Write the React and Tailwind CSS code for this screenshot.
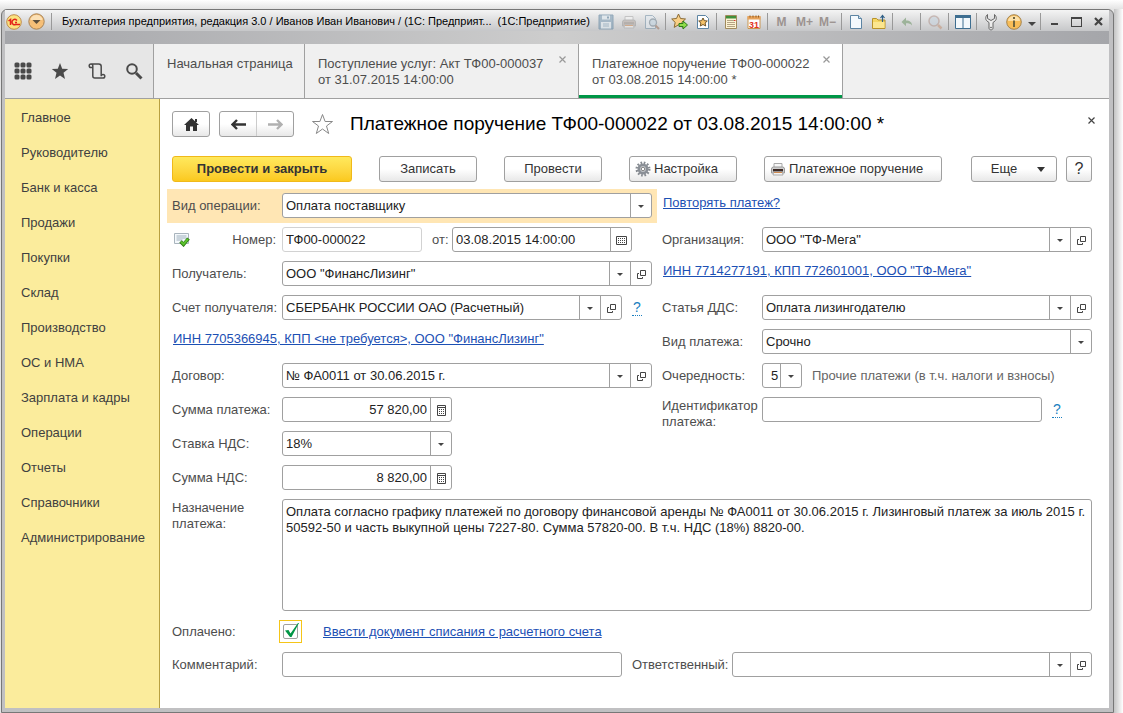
import React from 'react';

const menu = [
  'Главное',
  'Руководителю',
  'Банк и касса',
  'Продажи',
  'Покупки',
  'Склад',
  'Производство',
  'ОС и НМА',
  'Зарплата и кадры',
  'Операции',
  'Отчеты',
  'Справочники',
  'Администрирование',
];

/* ---------- icons ---------- */

const SaveIcon = () => (
  <svg width="16" height="16" viewBox="0 0 16 16" opacity="0.7">
    <path d="M1 1h14v14H1z" fill="#8fa9bd" stroke="#6f8ea6" />
    <path d="M4 1.500h8v4H4zM3 8h10v6.500H3z" fill="#dfe8ee" />
    <path d="M5 10h6M5 12h6" stroke="#8fa9bd" />
    <path d="M9 2.500h2v2H9z" fill="#6f8ea6" />
  </svg>
);

const PrintIcon = ({ faded }) => (
  <svg width="16" height="16" viewBox="0 0 16 16" opacity={faded ? 0.55 : 1}>
    <path d="M4 2.500h8v4H4z" fill="#f7f7f7" stroke="#aaa" />
    <path d="M1.500 8q0-2 2-2h9q2 0 2 2v4h-13z" fill={faded ? '#b5aaa4' : '#cfcfcf'} stroke="#999" />
    <path d="M3 8h10v2.500H3z" fill={faded ? '#9a8f88' : '#3c2a26'} />
    <path d="M3.500 11h9l.5 3h-10z" fill="#f3f3f3" stroke="#aaa" />
    <path d="M4 11.500h8" stroke="#d08a50" />
  </svg>
);

const PreviewIcon = () => (
  <svg width="16" height="16" viewBox="0 0 16 16" opacity="0.6">
    <path d="M1.500 1.500h7l3 3v10h-10z" fill="#e3eaf0" stroke="#7c97ab" />
    <circle cx="9" cy="8.500" r="3.500" fill="#c3d5e2" stroke="#7b8b98" strokeWidth="1.300" />
    <path d="M11.500 11.500 15 15" stroke="#a07a66" strokeWidth="2" />
  </svg>
);

const StarAddIcon = () => (
  <svg width="17" height="17" viewBox="0 0 17 17">
    <path d="m7.500 1 2 4.500 5 .500-3.700 3.400 1 5-4.300-2.600L3.200 14.400l1-5L.7 6l4.800-.500z" fill="#f9cf86" stroke="#8a6a33" />
    <path d="M8 10.500h4v-2.500l4.500 4-4.500 4v-2.500H8z" fill="#8fdc4b" stroke="#2e7d1a" />
  </svg>
);

const StarDocIcon = () => (
  <svg width="16" height="16" viewBox="0 0 16 16">
    <path d="M2.500 1.500h8l3 3v10h-11z" fill="#fff" stroke="#5c84a3" />
    <path d="m8 4 1.300 2.700 3 .300-2.200 2 .600 3L8 10.500 5.300 12l.600-3-2.200-2 3-.300z" fill="#f5c36a" stroke="#6f5324" />
  </svg>
);

const CalcIcon = () => (
  <svg width="16" height="16" viewBox="0 0 16 16">
    <path d="M2.500 1.500h11v13h-11z" fill="#fdf3d4" stroke="#a08a5c" />
    <path d="M3 2h10v2.500H3z" fill="#3f8f3a" />
    <path d="M4.500 6.500h7M4.500 8.500h7M4.500 10.500h7M4.500 12.500h7" stroke="#6b5532" strokeDasharray="1 1" />
    <path d="M11 6h1.500v1H11z" fill="#d33" />
  </svg>
);

const CalendarIcon = () => (
  <svg width="16" height="16" viewBox="0 0 16 16">
    <path d="M2 2.500h12v12H2z" fill="#fff" stroke="#c99650" />
    <path d="M1.500 2h13v3.500h-13z" fill="#e8a35b" />
    <path d="M4 1.500v2M7 1.500v2M10 1.500v2M12.500 1.500v2" stroke="#8d5a23" />
    <text x="8" y="13.500" textAnchor="middle" fontSize="9" fontWeight="bold" fill="#e2341d" fontFamily="Liberation Sans, sans-serif">31</text>
  </svg>
);

const DocIcon = () => (
  <svg width="16" height="16" viewBox="0 0 16 16">
    <path d="M2.500 1.500h8l3 3v10h-11z" fill="#f4f9fd" stroke="#5c84a3" />
    <path d="M10.500 1.500v3h3" fill="#cfe0ec" stroke="#5c84a3" />
  </svg>
);

const FolderIcon = () => (
  <svg width="16" height="16" viewBox="0 0 16 16">
    <path d="M1.500 4.500h4l1.500 1.500h7v8.500h-12.500z" fill="#f5d765" stroke="#b8922a" />
    <path d="M2 8h11.500v6H2z" fill="#fbe68f" />
    <path d="M11.500 8V2M9.500 4l2-2.500 2 2.500" fill="none" stroke="#2f5f86" strokeWidth="1.200" />
  </svg>
);

const UndoIcon = () => (
  <svg width="16" height="16" viewBox="0 0 16 16">
    <path d="M7 3.500v3c4 0 6 2 6 5-1.500-2-3-2.300-6-2.300v3L2.500 8z" fill="#9db39a" />
  </svg>
);

const LensIcon = () => (
  <svg width="16" height="16" viewBox="0 0 16 16" opacity="0.6">
    <circle cx="7" cy="7" r="5" fill="#c6d2dc" stroke="#b39a92" strokeWidth="1.500" />
    <path d="m11 11 3.500 3.500" stroke="#c59a80" strokeWidth="2.500" />
  </svg>
);

const PanelsIcon = () => (
  <svg width="16" height="16" viewBox="0 0 16 16">
    <path d="M.5 1.500h15v13H.5z" fill="#f3f8fb" stroke="#3e6e90" />
    <path d="M0 1h16v3H0z" fill="#3e6e90" />
    <path d="M8 4v11" stroke="#3e6e90" />
  </svg>
);

const WrenchIcon = () => (
  <svg width="16" height="18" viewBox="0 0 16 18">
    <path d="M4.500 1.500v4L8 7.500l3.500-2v-4c2 1.500 2.500 5 .500 6.500l-2 1.500v5.500c0 2.500-4 2.500-4 0V9.500L4 8C2 6.500 2.500 3 4.500 1.500z" fill="#ececec" stroke="#666" />
    <circle cx="8" cy="14.500" r=".8" fill="#555" />
  </svg>
);

const InfoIcon = () => (
  <svg width="16" height="16" viewBox="0 0 16 16">
    <circle cx="8" cy="8" r="7.300" fill="#f8bd58" stroke="#a58550" />
    <path d="M2 7a6 5 0 0 1 12 0" fill="#fce0a8" />
    <path d="M7 6.500h2V13H7zM7 3h2v2H7z" fill="#6f6540" />
  </svg>
);

const LogoIcon = () => (
  <svg width="16" height="16" viewBox="0 0 16 16">
    <circle cx="8" cy="8" r="7.300" fill="#fbe27e" stroke="#c08b4c" />
    <path d="M2.500 7 4.500 5.500V11M11 6.500C8.500 4 6 6 6 8s2 3.300 3.500 2.500H14M11 8.500H9" fill="none" stroke="#e3231b" strokeWidth="1.500" />
  </svg>
);

const MenuDropIcon = () => (
  <svg width="17" height="17" viewBox="0 0 17 17">
    <circle cx="8.500" cy="8.500" r="7.700" fill="#f6bf77" stroke="#a78254" />
    <path d="M2.500 7a6 5 0 0 1 12 0" fill="#fbe0b5" />
    <path d="M4.500 7h8l-4 4z" fill="#5d4f3c" />
  </svg>
);

const Caret = () => (
  <svg width="6" height="3" viewBox="0 0 6 3">
    <path d="M0 0h6L3 3z" fill="#444" />
  </svg>
);

const OpenIcon = () => (
  <svg width="9" height="9" viewBox="0 0 9 9" fill="none" stroke="#444">
    <path d="M3.500.5h5v5h-5z" />
    <path d="M2 3.500H.5v5h5V7" />
  </svg>
);

const DateIcon = () => (
  <svg width="11" height="9" viewBox="0 0 11 9" fill="none" stroke="#444">
    <path d="M.5.5h10v8H.5z" />
    <path d="M2 2.500h7M2 4.500h7M2 6.500h7" strokeDasharray="1 1" />
  </svg>
);

const SumIcon = () => (
  <svg width="9" height="11" viewBox="0 0 9 11" fill="none" stroke="#444">
    <path d="M.5.5h8v10h-8z" />
    <path d="M1 2.500h7" />
    <path d="M2 4.500h5M2 6.500h5M2 8.500h5" strokeDasharray="1 1" />
  </svg>
);

const GearIcon = () => (
  <svg width="16" height="16" viewBox="0 0 16 16">
    <circle cx="8" cy="8" r="6.300" fill="none" stroke="#858a90" strokeWidth="2.400" strokeDasharray="1.650 1.650" />
    <circle cx="8" cy="8" r="4.200" fill="#c3c6ca" stroke="#8a8f96" strokeWidth="2.600" />
    <circle cx="8" cy="8" r="1.700" fill="#fff" stroke="#888" />
  </svg>
);

const PostedIcon = () => (
  <svg width="16" height="14" viewBox="0 0 16 14">
    <path d="M.5.5h14v10H.5z" fill="#f4f8fb" stroke="#a9b4bd" />
    <path d="M2.500 3h10M2.500 5h10M2.500 7h6" stroke="#9fb0bd" />
    <path d="m6.500 8.500 3 3 5-6" fill="none" stroke="#2c7a12" strokeWidth="3.500" />
    <path d="m7 8.800 2.500 2.400L14 6" fill="none" stroke="#5cc22e" strokeWidth="2" />
  </svg>
);

const CloseIcon = ({ color }) => (
  <svg width="7" height="7" viewBox="0 0 7 7">
    <path d="m.5.5 6 6m0-6-6 6" stroke={color} strokeWidth="1.200" />
  </svg>
);

/* ---------- window bar ---------- */

const Sep = () => <span className="flex w-[5px] shrink-0 justify-center"><i className="h-[17px] w-px bg-[#999]" /></span>;

const Tool = ({ label, children }) => (
  <button aria-label={label} className="flex h-[18px] w-[23px] shrink-0 items-center justify-center text-xs font-bold text-[#9c9390]">
    {children}
  </button>
);

const TitleBar = () => (
  <header>
    <div className="flex h-[21px] items-center bg-linear-to-b from-[#f4f4f4] to-[#c6c7c9] pt-[2px]">
      <button aria-label="Меню" className="w-[23px] shrink-0 pl-px"><LogoIcon /></button>
      <button aria-label="Команды" className="w-[21px] shrink-0"><MenuDropIcon /></button>
      <Sep />
      <h1 className="ml-2 min-w-0 flex-1 whitespace-pre text-[11px] text-black">
        Бухгалтерия предприятия, редакция 3.0 / Иванов Иван Иванович / (1С: Предприят...  (1С:Предприятие)
      </h1>
      <Tool label="Сохранить"><SaveIcon /></Tool>
      <Tool label="Печать"><PrintIcon faded /></Tool>
      <Tool label="Просмотр"><PreviewIcon /></Tool>
      <Sep />
      <Tool label="Добавить в избранное"><StarAddIcon /></Tool>
      <Tool label="Избранное"><StarDocIcon /></Tool>
      <Sep />
      <Tool label="Калькулятор"><CalcIcon /></Tool>
      <Tool label="Календарь"><CalendarIcon /></Tool>
      <Sep />
      <Tool label="M">M</Tool>
      <Tool label="M+">M+</Tool>
      <Tool label="M-">M−</Tool>
      <Sep />
      <Tool label="Новый"><DocIcon /></Tool>
      <Tool label="Открыть"><FolderIcon /></Tool>
      <Sep />
      <Tool label="Назад"><UndoIcon /></Tool>
      <Sep />
      <Tool label="Найти"><LensIcon /></Tool>
      <Sep />
      <Tool label="Панели"><PanelsIcon /></Tool>
      <Sep />
      <Tool label="Сервис"><WrenchIcon /></Tool>
      <Tool label="Справка"><InfoIcon /></Tool>
      <span className="flex w-[13px] shrink-0 justify-center pt-1">
        <svg width="8" height="4" viewBox="0 0 8 4"><path d="M0 0h8L4 4z" fill="#444" /></svg>
      </span>
      <Sep />
      <button aria-label="Свернуть" className="flex w-[22px] shrink-0 justify-center pt-1"><i className="h-[2px] w-[7px] bg-[#444]" /></button>
      <button aria-label="Развернуть" className="flex w-[22px] shrink-0 justify-center"><i className="h-[10px] w-[11px] border border-t-2 border-[#444]" /></button>
      <button aria-label="Закрыть" className="flex w-[22px] shrink-0 justify-center">
        <svg width="9" height="9" viewBox="0 0 9 9"><path d="m1 1 7 7m0-7-7 7" stroke="#444" strokeWidth="2.200" /></svg>
      </button>
    </div>
    <div className="h-[13px] bg-linear-to-r from-[#a5a6aa] via-[#cdcdcd] to-[#a5a6aa]" />
  </header>
);

const Tab = ({ lines, active, closable, className }) => (
  <div className={`border-r border-[#a0a0a0] ${className}`}>
    <div className={`flex h-full justify-between pt-3 pl-[13px] ${active ? 'border-b-3 border-[#009646] bg-white' : 'bg-[#f0f0f0]'}`}>
      <button className="flex flex-col items-start text-left leading-4 whitespace-nowrap text-[#4d4d4d]">
        {lines.map((line) => <span key={line}>{line}</span>)}
      </button>
      {closable && (
        <button aria-label="Закрыть вкладку" className="mr-3 h-[7px]"><CloseIcon color="#999" /></button>
      )}
    </div>
  </div>
);

const TabBar = () => (
  <nav className="flex h-[55px] border-b border-[#a0a0a0] bg-[#f0f0f0]">
    <div className="flex w-[149px] shrink-0 items-center justify-between border-r border-[#a0a0a0] bg-[#e6e6e6] pr-[10px] pl-[9px]">
      <button aria-label="Разделы">
        <svg width="18" height="18" viewBox="0 0 18 18" fill="#4a4a4a">
          {[3, 9, 15].map((y) => [3, 9, 15].map((x) => <rect key={`${x}-${y}`} x={x - 2.5} y={y - 2.5} width="5" height="5" rx="1.500" />))}
        </svg>
      </button>
      <button aria-label="Избранное">
        <svg width="18" height="18" viewBox="0 0 18 18"><path d="m9 1 2.200 5.700 6 .300-4.700 3.800L14 17l-5-3.500L4 17l1.500-6.200L.8 7l6-.300z" fill="#4a4a4a" /></svg>
      </button>
      <button aria-label="История">
        <svg width="18" height="18" viewBox="0 0 18 18" fill="none" stroke="#4a4a4a" strokeWidth="1.500">
          <path d="M4.500 5.500H3a1.800 1.800 0 1 1 1.800-1.800V14q0 2 2 2H15a1.800 1.800 0 1 0-1.800-1.800V4.500q0-2.500-2.500-2.500H3" />
        </svg>
      </button>
      <button aria-label="Поиск">
        <svg width="18" height="18" viewBox="0 0 18 18" fill="none" stroke="#4a4a4a">
          <circle cx="7" cy="7" r="4.800" strokeWidth="2" />
          <path d="m11 11 5.500 5.500" strokeWidth="3" />
        </svg>
      </button>
    </div>
    <Tab className="w-[151px]" lines={['Начальная страница']} />
    <Tab className="w-[274px]" closable lines={['Поступление услуг: Акт ТФ00-000037', 'от 31.07.2015 14:00:00']} />
    <Tab className="w-[264px]" closable active lines={['Платежное поручение ТФ00-000022', 'от 03.08.2015 14:00:00 *']} />
  </nav>
);

/* ---------- form parts ---------- */

const Row = ({ className = '', children }) => <div className={`flex h-[34px] pt-1 pb-[5px] ${className}`}>{children}</div>;

const Label = ({ id, className = 'w-[110px]', children }) => (
  <label htmlFor={id} className={`shrink-0 self-center whitespace-nowrap text-[#4d4d4d] ${className}`}>{children}</label>
);

const box = 'flex h-[25px] min-w-0 overflow-hidden rounded-[3px] border bg-white text-[#222]';

const Side = ({ label, children }) => (
  <button aria-label={label} className="flex w-[21px] shrink-0 items-center justify-center border-l border-[#a0a0a0] pt-px">{children}</button>
);

const Combo = ({ id, value, open, pad = 'pl-[3px]', className = 'flex-1' }) => (
  <div className={`${box} border-[#a0a0a0] ${className}`}>
    <div className="relative min-w-0 flex-1">
      <select id={id} defaultValue={value} className={`h-full w-full appearance-none bg-transparent outline-none ${pad}`}>
        <option>{value}</option>
      </select>
      <span className="pointer-events-none absolute inset-y-0 right-0 flex w-[21px] items-center justify-center border-l border-[#a0a0a0] pt-px"><Caret /></span>
    </div>
    {open && <Side label="Открыть"><OpenIcon /></Side>}
  </div>
);

const Input = ({ id, value = '', side, right, readOnly, className = 'flex-1' }) => (
  <div className={`${box} ${readOnly ? 'border-[#d2d2d2]' : 'border-[#a0a0a0]'} ${className}`}>
    <input id={id} defaultValue={value} readOnly={readOnly} className={`min-w-0 flex-1 px-[3px] outline-none ${right ? 'text-right' : ''}`} />
    {side}
  </div>
);

const Link = ({ children }) => <a href="#" className="pl-px whitespace-nowrap text-[#1c50b4] underline">{children}</a>;

const Hint = () => <a href="#" className="ml-[10px] self-center border-b border-dotted border-[#1a7fc0] px-px text-sm leading-4 text-[#1a7fc0]">?</a>;

const grey = 'border-[#a0a0a0] bg-linear-to-b from-white from-50% to-[#e8e8e8] text-[#333]';
const yellow = 'border-[#f0b91a] bg-linear-to-b from-[#ffe95c] to-[#fbc91c] font-bold text-[#333]';

const Button = ({ look = grey, align = 'justify-center', className = '', children }) => (
  <button className={`flex h-[26px] shrink-0 items-center rounded-[3px] border ${look} ${align} ${className}`}>
    {children}
  </button>
);

const DocumentForm = () => (
  <main className="min-w-0 flex-1 bg-white pt-3 pr-[17px] pb-[31px] pl-3">
    <div className="flex h-[26px] items-center">
      <Button className="w-[38px]">
        <svg width="15" height="13" viewBox="0 0 15 13" fill="#333"><path d="M7.500 0 15 7h-2v6H9V8.500H6V13H2V7H0zM11 1h2v3h-2z" /></svg>
      </Button>
      <div className={`ml-[9px] flex h-[26px] w-[75px] shrink-0 rounded-[3px] border ${grey}`}>
        <button aria-label="Назад" className="flex flex-1 items-center justify-center border-r border-[#ccc]">
          <svg width="15" height="11" viewBox="0 0 15 11"><path d="M6 1 1.500 5.500 6 10M2 5.500h13" fill="none" stroke="#333" strokeWidth="2.400" /></svg>
        </button>
        <button aria-label="Вперед" className="flex flex-1 items-center justify-center">
          <svg width="15" height="11" viewBox="0 0 15 11"><path d="m9 1 4.500 4.500L9 10m4-4.500H0" fill="none" stroke="#b0b0b0" strokeWidth="2.400" /></svg>
        </button>
      </div>
      <button aria-label="В избранное" className="ml-[17px]">
        <svg width="23" height="22" viewBox="0 0 23 22"><path d="m11.500 1.500 2.600 7h7.400l-6 4.500 2.200 7.500-6.200-4.500-6.200 4.500L7.500 13l-6-4.500h7.400z" fill="#fff" stroke="#888" /></svg>
      </button>
      <h2 className="ml-4 flex-1 whitespace-nowrap text-[19px] text-black">Платежное поручение ТФ00-000022 от 03.08.2015 14:00:00 *</h2>
      <button aria-label="Закрыть" className="-mr-[3px] mb-[7px]"><CloseIcon color="#444" /></button>
    </div>

    <div className="mt-[19px] flex h-[26px] items-center gap-[27px]">
      <Button look={yellow} className="w-[180px]">Провести и закрыть</Button>
      <Button className="w-[98px]">Записать</Button>
      <Button className="w-[98px]">Провести</Button>
      <Button align="justify-start" className="w-[108px] gap-[3px] pl-[5px]"><GearIcon />Настройка</Button>
      <Button align="justify-start" className="w-[178px] gap-[3px] pl-[5px]"><PrintIcon />Платежное поручение</Button>
      <div className="ml-auto flex gap-[9px]">
        <Button className="w-[86px] gap-5 pl-2">
          Еще
          <svg width="8" height="5" viewBox="0 0 8 5"><path d="M0 0h8L4 5z" fill="#333" /></svg>
        </Button>
        <Button className="w-[26px] text-base">?</Button>
      </div>
    </div>

    <div className="mt-[7px] grid grid-cols-[48fr_43fr] gap-x-[10px]">
      <div className="min-w-0">
        <Row className="-mx-[5px] bg-[#ffe6b4] px-[5px]">
          <Label id="operation">Вид операции:</Label>
          <Combo id="operation" value="Оплата поставщику" />
        </Row>
        <Row>
          <div className="flex w-[110px] shrink-0 items-center justify-between pr-[6px] pl-[2px]">
            <PostedIcon />
            <Label id="number" className="">Номер:</Label>
          </div>
          <Input id="number" value="ТФ00-000022" readOnly className="w-[140px]" />
          <Label id="date" className="w-[30px] pl-[10px]">от:</Label>
          <Input id="date" value="03.08.2015 14:00:00" className="w-[180px]" side={<Side label="Выбрать дату"><DateIcon /></Side>} />
        </Row>
        <Row>
          <Label id="payee">Получатель:</Label>
          <Combo id="payee" value={'ООО "ФинансЛизинг"'} open />
        </Row>
        <Row>
          <Label id="account">Счет получателя:</Label>
          <Combo id="account" value="СБЕРБАНК РОССИИ ОАО (Расчетный)" open />
          <div className="flex w-[30px]"><Hint /></div>
        </Row>
        <Row><Link>{'ИНН 7705366945, КПП <не требуется>, ООО "ФинансЛизинг"'}</Link></Row>
        <Row>
          <Label id="contract">Договор:</Label>
          <Combo id="contract" value="№ ФА0011 от 30.06.2015 г." open />
        </Row>
        <Row>
          <Label id="sum">Сумма платежа:</Label>
          <Input id="sum" value="57 820,00" right className="w-[170px]" side={<Side label="Калькулятор"><SumIcon /></Side>} />
        </Row>
        <Row>
          <Label id="rate">Ставка НДС:</Label>
          <Combo id="rate" value="18%" className="w-[170px]" />
        </Row>
        <Row>
          <Label id="vat">Сумма НДС:</Label>
          <Input id="vat" value="8 820,00" right className="w-[170px]" side={<Side label="Калькулятор"><SumIcon /></Side>} />
        </Row>
      </div>

      <div className="min-w-0">
        <Row><Link>Повторять платеж?</Link></Row>
        <Row>
          <Label id="org" className="w-[100px]">Организация:</Label>
          <Combo id="org" value={'ООО "ТФ-Мега"'} open />
        </Row>
        <Row><Link>{'ИНН 7714277191, КПП 772601001, ООО "ТФ-Мега"'}</Link></Row>
        <Row>
          <Label id="dds" className="w-[100px]">Статья ДДС:</Label>
          <Combo id="dds" value="Оплата лизингодателю" open />
        </Row>
        <Row>
          <Label id="kind" className="w-[100px]">Вид платежа:</Label>
          <Combo id="kind" value="Срочно" />
        </Row>
        <Row>
          <Label id="priority" className="w-[100px]">Очередность:</Label>
          <Combo id="priority" value="5" pad="pl-2" className="w-[40px] shrink-0" />
          <span className="ml-[10px] self-center whitespace-nowrap text-[#666]">Прочие платежи (в т.ч. налоги и взносы)</span>
        </Row>
        <Row>
          <label htmlFor="ident" className="w-[100px] shrink-0 pt-px leading-4 text-[#4d4d4d]">Идентификатор платежа:</label>
          <Input id="ident" />
          <div className="flex w-[50px]"><Hint /></div>
        </Row>
      </div>
    </div>

    <div className="flex pt-1">
      <label htmlFor="purpose" className="w-[110px] shrink-0 pt-px leading-4 text-[#4d4d4d]">Назначение платежа:</label>
      <textarea
        id="purpose"
        defaultValue="Оплата согласно графику платежей по договору финансовой аренды № ФА0011 от 30.06.2015 г. Лизинговый платеж за июль 2015 г. 50592-50 и часть выкупной цены 7227-80. Сумма 57820-00. В т.ч. НДС (18%) 8820-00."
        className="h-[112px] min-w-0 flex-1 resize-none rounded-[3px] border border-[#a0a0a0] px-[3px] py-1 leading-4 text-[#222] outline-none"
      />
    </div>

    <div className="flex h-[41px] items-center">
      <Label id="paid" className="w-[107px]">Оплачено:</Label>
      <span className="relative flex size-[23px] items-center justify-center border border-[#f5c518]">
        <input id="paid" type="checkbox" defaultChecked className="size-[15px] appearance-none rounded-[2px] border border-[#a0a0a0] bg-white outline-none" />
        <svg className="pointer-events-none absolute top-[2px] left-[5px]" width="15" height="15" viewBox="0 0 15 15">
          <path d="M0 7.500 3.500 7l2 3.500L13 0h1L6.500 14H5z" fill="#009646" />
        </svg>
      </span>
      <span className="ml-5"><Link>Ввести документ списания с расчетного счета</Link></span>
    </div>

    <div className="grid grid-cols-[45fr_46fr] gap-[10px]">
      <div className="flex min-w-0">
        <Label id="comment">Комментарий:</Label>
        <Input id="comment" />
      </div>
      <div className="flex min-w-0">
        <Label id="responsible" className="w-[100px]">Ответственный:</Label>
        <Combo id="responsible" value="" open />
      </div>
    </div>
  </main>
);

export default function App() {
  return (
    <div className="flex min-h-screen bg-linear-to-b from-white to-[#e4e4e4] to-[9px] pt-[9px] pr-[9px] pl-px font-['Liberation_Sans',Arial,sans-serif] text-[13px]">
      <div className="flex min-w-0 flex-1 flex-col rounded-t-md border border-[#777] bg-[#c0c0c2] pr-1 pb-1 pl-[3px]">
        <TitleBar />
        <TabBar />
        <div className="flex flex-1">
          <aside className="w-[155px] shrink-0 border-r border-[#b8a040] bg-[#fbec9c] pt-px">
            {menu.map((item) => (
              <a key={item} href="#" className="flex h-[35px] items-center pl-4 whitespace-nowrap text-[#404040]">{item}</a>
            ))}
          </aside>
          <DocumentForm />
        </div>
      </div>
      <div className="-mr-[9px] w-[9px] bg-linear-to-r from-[#c4c4c4] to-white" />
    </div>
  );
}
